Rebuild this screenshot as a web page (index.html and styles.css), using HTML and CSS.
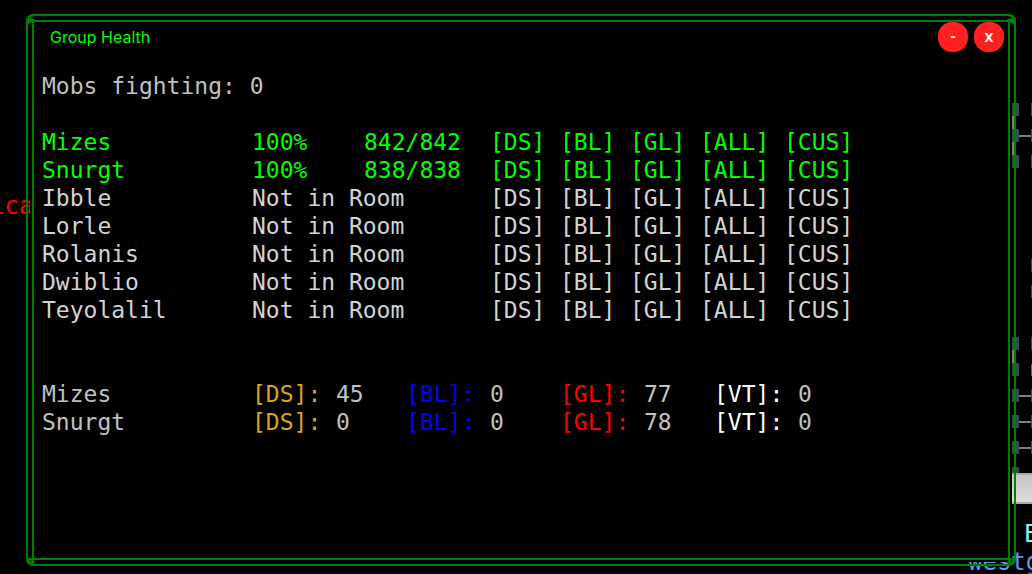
FILE: index.html
```html
<!DOCTYPE html>
<html lang="en">
<head>
<meta charset="utf-8">
<title>Group Health</title>
<link rel="stylesheet" href="styles.css">
</head>
<body>
<div class="backdrop" aria-hidden="true">
  <span class="console red-text">ica</span>
  <svg class="map" width="24" height="574" viewBox="0 0 24 574">
    <g fill="none" stroke="#808080" stroke-width="2">
      <path d="M5 110V162M5 344V370M8 136H24M8 396H24M8 422H24M8 448H24"/>
    </g>
    <g fill="#2f4f4f">
      <path d="M4 103h7v13H4zM4 129h7v13H4zM4 155h7v13H4zM4 337h7v13H4zM4 363h7v13H4zM4 389h7v13H4zM4 415h7v13H4zM4 441h7v13H4zM4 467h7v8H4z"/>
      <path d="M23 103h1v13h-1zM23 129h1v13h-1zM23 155h1v13h-1zM23 259h1v13h-1zM23 285h1v13h-1zM23 337h1v13h-1zM23 389h1v13h-1zM23 415h1v13h-1zM23 441h1v13h-1z"/>
      <path fill="#008b8b" d="M23 364h1v12h-1z"/>
    </g>
  </svg>
  <span class="bar"></span>
  <span class="console east">E</span>
  <span class="console west">westg</span>
</div>
<main class="window">
  <svg class="corner top left" viewBox="0 0 10 10"><path d="M1 10V7Q1 1 9 1M2 10Q3 5 9 6M2 8L5 4M4 9L7 5"/></svg>
  <svg class="corner top right" viewBox="0 0 10 10"><path d="M1 10V7Q1 1 9 1M2 10Q3 5 9 6M2 8L5 4M4 9L7 5"/></svg>
  <svg class="corner bottom left" viewBox="0 0 10 10"><path d="M1 10V7Q1 1 8 1M2 7Q6 8 8 3M2 7Q3 3 8 3"/></svg>
  <svg class="corner bottom right" viewBox="0 0 10 10"><path d="M1 10V7Q1 1 8 1M2 7Q6 8 8 3M2 7Q3 3 8 3"/></svg>
  <section class="panel">
    <header class="titlebar">
      <h1>Group Health</h1>
      <button type="button" aria-label="Minimize">-</button>
      <button type="button" aria-label="Close">x</button>
    </header>
    <div class="content">
      <p>Mobs fighting: 0</p>
      <table class="members">
        <colgroup><col class="name"><col class="percent"><col class="health"><col class="spell"><col class="spell"><col class="spell"><col class="wide"><col class="wide"></colgroup>
        <tbody>
        <tr class="present"><td>Mizes</td><td>100%</td><td>842/842</td><td><button type="button">[DS]</button></td><td><button type="button">[BL]</button></td><td><button type="button">[GL]</button></td><td><button type="button">[ALL]</button></td><td><button type="button">[CUS]</button></td></tr>
        <tr class="present"><td>Snurgt</td><td>100%</td><td>838/838</td><td><button type="button">[DS]</button></td><td><button type="button">[BL]</button></td><td><button type="button">[GL]</button></td><td><button type="button">[ALL]</button></td><td><button type="button">[CUS]</button></td></tr>
        <tr><td>Ibble</td><td colspan="2">Not in Room</td><td><button type="button">[DS]</button></td><td><button type="button">[BL]</button></td><td><button type="button">[GL]</button></td><td><button type="button">[ALL]</button></td><td><button type="button">[CUS]</button></td></tr>
        <tr><td>Lorle</td><td colspan="2">Not in Room</td><td><button type="button">[DS]</button></td><td><button type="button">[BL]</button></td><td><button type="button">[GL]</button></td><td><button type="button">[ALL]</button></td><td><button type="button">[CUS]</button></td></tr>
        <tr><td>Rolanis</td><td colspan="2">Not in Room</td><td><button type="button">[DS]</button></td><td><button type="button">[BL]</button></td><td><button type="button">[GL]</button></td><td><button type="button">[ALL]</button></td><td><button type="button">[CUS]</button></td></tr>
        <tr><td>Dwiblio</td><td colspan="2">Not in Room</td><td><button type="button">[DS]</button></td><td><button type="button">[BL]</button></td><td><button type="button">[GL]</button></td><td><button type="button">[ALL]</button></td><td><button type="button">[CUS]</button></td></tr>
        <tr><td>Teyolalil</td><td colspan="2">Not in Room</td><td><button type="button">[DS]</button></td><td><button type="button">[BL]</button></td><td><button type="button">[GL]</button></td><td><button type="button">[ALL]</button></td><td><button type="button">[CUS]</button></td></tr>
        </tbody>
      </table>
      <table class="totals">
        <colgroup><col class="name"><col class="key"><col class="count"><col class="key"><col class="count"><col class="key"><col class="count"><col class="key"><col class="count"></colgroup>
        <tbody>
        <tr><td>Mizes</td><td class="ds">[DS]:</td><td>45</td><td class="bl">[BL]:</td><td>0</td><td class="gl">[GL]:</td><td>77</td><td class="vt">[VT]:</td><td>0</td></tr>
        <tr><td>Snurgt</td><td class="ds">[DS]:</td><td>0</td><td class="bl">[BL]:</td><td>0</td><td class="gl">[GL]:</td><td>78</td><td class="vt">[VT]:</td><td>0</td></tr>
        </tbody>
      </table>
    </div>
  </section>
</main>
</body>
</html>
```
FILE: styles.css
```css
* { box-sizing: border-box; }
body {
  margin: 0;
  min-height: 100vh;
  display: flex;
  position: relative;
  overflow: hidden;
  padding: 14px 16px 8px 26px;
  background: #000;
  color: #c0c0c0;
  font: 23px/28px "DejaVu Sans Mono", monospace;
}
.backdrop { position: absolute; inset: 0; overflow: hidden; }
.backdrop > * { position: absolute; }
.console { font-size: 24px; }
.red-text { left: -10px; top: 192px; color: #f00; }
.map { right: 0; top: 0; }
.bar {
  right: 0;
  top: 473px;
  width: 20px;
  height: 31px;
  background: linear-gradient(#c4c4c4, #dedede);
  border: 2px solid #a9a9a9;
  border-width: 2px 0;
}
.east { left: 1024px; top: 520px; color: #7fffff; }
.west { left: 968px; top: 548px; color: #6495ed; }
.window {
  flex: 1;
  display: flex;
  position: relative;
  padding: 4px;
  border: 2px solid #008000;
  border-radius: 8px;
}
.corner {
  position: absolute;
  width: 10px;
  height: 10px;
  fill: none;
  stroke: #008000;
  stroke-width: 2;
}
.top { top: -2px; }
.bottom { bottom: -2px; }
.left { left: -2px; }
.right { right: -2px; }
.top.right { transform: scaleX(-1); }
.bottom.left { transform: scaleY(-1); }
.bottom.right { transform: scale(-1); }
.panel {
  flex: 1;
  border: 2px solid #008000;
  outline: 2px solid #000;
  background: #000;
}
.titlebar {
  display: flex;
  align-items: center;
  gap: 6px;
  height: 30px;
  padding: 0 4px 0 16px;
}
.titlebar h1 {
  flex: 1;
  margin: 0;
  color: #0f0;
  font: 16px/30px Inter, sans-serif;
}
.titlebar button {
  width: 30px;
  height: 30px;
  padding: 0 0 2px;
  border: 0;
  border-radius: 14px;
  background: #ff2020;
  color: #fff;
  font: 600 16px/28px "Noto Sans", sans-serif;
}
.content { padding: 20px 8px; }
.content p { margin: 0 0 28px; }
.content table { table-layout: fixed; border-collapse: collapse; }
.content td { padding: 0; white-space: nowrap; }
.content button {
  display: block;
  padding: 0;
  border: 0;
  background: none;
  color: inherit;
  font: inherit;
}
.members { width: 826px; color: #d3d3d3; }
.totals { width: 826px; margin-top: 56px; }
.present { color: #0f0; }
.name { width: 210px; }
.percent { width: 112px; }
.health { width: 126px; }
.spell { width: 70px; }
.wide { width: 84px; }
.key { width: 84px; }
.count { width: 70px; }
.ds { color: #daa520; }
.bl { color: #00f; }
.gl { color: #f00; }
.vt { color: #fff; }
```
